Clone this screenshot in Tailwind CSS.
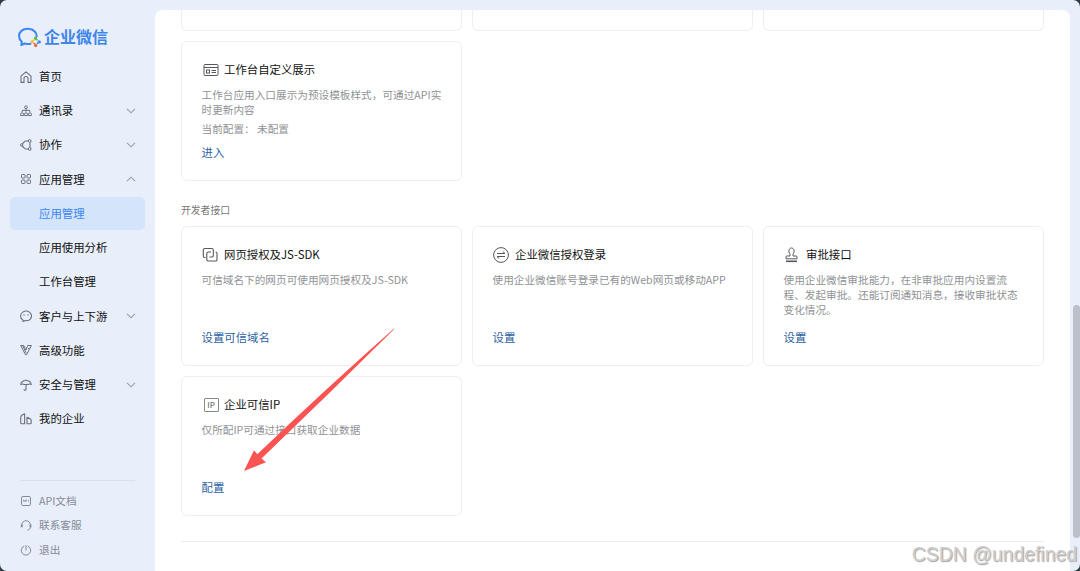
<!DOCTYPE html>
<html lang="zh-CN">
  <head>
    <meta charset="UTF-8" />
    <meta name="viewport" content="width=device-width, initial-scale=1.0" />
    <script src="https://cdn.jsdelivr.net/npm/@tailwindcss/browser@4"></script>
    <title>企业微信</title>
    <style>
      body {
        font-family: "Noto Sans CJK SC", sans-serif;
      }
    </style>
  </head>

  <body class="bg-[#2f3d40] overflow-hidden">
    <div
      class="relative flex h-[571px] w-[1080px] overflow-hidden rounded-[7px] bg-[#e8eefa]"
    >
      <!-- Sidebar -->
      <aside class="flex w-[155px] shrink-0 flex-col">
        <div class="flex h-[59.4px] items-end pb-[11px] pl-[17px]">
          <svg class="-mb-[1px] h-[22px] w-[25px]" viewBox="0 0 25 22" fill="none">
            <path
              d="M13.500 16.800c-1.800.4-3.800.3-5.600-.3l-3.600 1.500.5-3.200C1.200 11.600 1.200 6.500 4.400 3.900 8 .9 14.500 1.100 17.800 4.500c1.400 1.500 2 3 1.900 4.700"
              stroke="#3f88ee"
              stroke-width="2.1"
              stroke-linecap="round"
              stroke-linejoin="round"
            />
            <path d="M18.200 10l3 3-1.200.8-2.600-1.600z" fill="#58bd4a" />
            <circle cx="18.500" cy="11" r="1.600" fill="#58bd4a" />
            <circle cx="15" cy="14.800" r="1.600" fill="#f6c644" />
            <path d="M14.500 13.800l2.600-2 .8 1.100-2 2.500z" fill="#f6c644" />
            <circle cx="18.700" cy="18.600" r="1.600" fill="#f0663a" />
            <path d="M16 16.300l1.200-.8 2.600 2.300-1 1.200z" fill="#f0663a" />
            <circle cx="22.300" cy="14.900" r="1.600" fill="#3f88ee" />
            <path d="M20.300 17.500l-.8-1.200 2-2.400 1.400 1.200z" fill="#3f88ee" />
          </svg>
          <span class="ml-[2px] text-[16px] leading-[24px] font-bold text-[#3f86ea]"
            >企业微信</span
          >
        </div>

        <nav class="text-[11.4px] text-[#111]">
          <a class="flex h-[34.25px] items-center pr-[19px] pl-5">
            <svg class="mr-[7px] size-3 text-[#6b717b]" viewBox="0 0 12 12" fill="none" stroke="currentColor" stroke-width="1.1">
              <path d="M1 5.200L6 .8l5 4.400v6.200H8V7.500a2 2 0 0 0-4 0v3.900H1z" stroke-linejoin="round" />
            </svg>
            首页
          </a>
          <a class="flex h-[34.25px] items-center pr-[19px] pl-5">
            <svg class="mr-[7px] size-3 text-[#6b717b]" viewBox="0 0 12 12" fill="none" stroke="currentColor">
              <circle cx="6" cy="2.300" r="1.400" />
              <path d="M6 3.700v3M2.200 7V5.400h7.600V7" />
              <path d="M.6 10.500V9.300a1.500 1.500 0 0 1 3 0v1.200zM4.500 10.500V9.300a1.500 1.500 0 0 1 3 0v1.200zM8.400 10.500V9.300a1.500 1.500 0 0 1 3 0v1.200z" />
            </svg>
            通讯录
            <svg class="ml-auto h-[6px] w-[10px]" viewBox="0 0 10 6" fill="none" stroke="#989ea8" stroke-width="1.100"><path d="M1 .8l4 4 4-4" /></svg>
          </a>
          <a class="flex h-[34.25px] items-center pr-[19px] pl-5">
            <svg class="mr-[7px] size-3 text-[#6b717b]" viewBox="0 0 12 12" fill="none" stroke="currentColor">
              <path d="M8.300 1.700L5 2.200 2.200 5M2.200 7L5 9.800l3.300.5M10 3.500v5" stroke-width="1.100" />
              <circle cx="1.700" cy="6" r="1.200" />
              <circle cx="9.700" cy="2" r="1.400" />
              <circle cx="9.700" cy="10" r="1.400" />
            </svg>
            协作
            <svg class="ml-auto h-[6px] w-[10px]" viewBox="0 0 10 6" fill="none" stroke="#989ea8" stroke-width="1.100"><path d="M1 .8l4 4 4-4" /></svg>
          </a>
          <a class="flex h-[34.25px] items-center pr-[19px] pl-5">
            <svg class="mr-[7px] size-3 text-[#6b717b]" viewBox="0 0 12 12" fill="none" stroke="currentColor">
              <rect x="1.500" y="1.500" width="3.500" height="3.500" rx=".7" />
              <rect x="7" y="1.500" width="3.500" height="3.500" rx=".7" />
              <rect x="1.500" y="7" width="3.500" height="3.500" rx=".7" />
              <rect x="7" y="7" width="3.500" height="3.500" rx=".7" />
            </svg>
            应用管理
            <svg class="ml-auto h-[6px] w-[10px]" viewBox="0 0 10 6" fill="none" stroke="#989ea8" stroke-width="1.100"><path d="M1 5.200l4-4 4 4" /></svg>
          </a>
          <a class="mx-[10px] my-[0.6px] flex h-[33px] items-center rounded-[5px] bg-[#d4e4fa] pl-[29px] text-[#3a87f3]">应用管理</a>
          <a class="flex h-[34.25px] items-center pl-[39px]">应用使用分析</a>
          <a class="flex h-[34.25px] items-center pl-[39px]">工作台管理</a>
          <a class="flex h-[34.25px] items-center pr-[19px] pl-5">
            <svg class="mr-[7px] size-3 text-[#6b717b]" viewBox="0 0 12 12" fill="none" stroke="currentColor">
              <path d="M3 10.200C-.2 8.300-.1 4 2.700 2.100c2-1.300 4.800-1.300 6.700 0 2.900 2 2.800 6.100-.1 7.900-1.400.8-2.800.9-4.300.6L3 11.500z" stroke-linejoin="round" stroke-width="1.100" />
              <path d="M4 4.300v1.400M8 4.300v1.400" />
            </svg>
            客户与上下游
            <svg class="ml-auto h-[6px] w-[10px]" viewBox="0 0 10 6" fill="none" stroke="#989ea8" stroke-width="1.100"><path d="M1 .8l4 4 4-4" /></svg>
          </a>
          <a class="flex h-[34.25px] items-center pr-[19px] pl-5">
            <svg class="mr-[7px] size-3 text-[#6b717b]" viewBox="0 0 12 12" fill="none" stroke="currentColor" stroke-linejoin="round">
              <path d="M.7 1.500h3L6 6l1.700-4.500h3.700L6.500 10.800h-1zM2.800 2l3.400 7M8 4.500h1.600" />
            </svg>
            高级功能
          </a>
          <a class="flex h-[34.25px] items-center pr-[19px] pl-5">
            <svg class="mr-[7px] size-3 text-[#6b717b]" viewBox="0 0 12 12" fill="none" stroke="currentColor" stroke-width="1.100">
              <path d="M.7 5.500C1.200 2.800 3.500 1.500 6 1.500s4.800 1.300 5.300 4c-1.400-.7-2.300-.7-3.300 0H4C3 4.800 2.100 4.800.7 5.500zM6 .5v1M6 5.500v4.700c0 1.300-2 1.300-2 0" stroke-linejoin="round" />
            </svg>
            安全与管理
            <svg class="ml-auto h-[6px] w-[10px]" viewBox="0 0 10 6" fill="none" stroke="#989ea8" stroke-width="1.100"><path d="M1 .8l4 4 4-4" /></svg>
          </a>
          <a class="flex h-[34.25px] items-center pr-[19px] pl-5">
            <svg class="mr-[7px] size-3 text-[#6b717b]" viewBox="0 0 12 12" fill="none" stroke="currentColor" stroke-linejoin="round">
              <path d="M2.300 10.800H1.500a.8.800 0 0 1-.8-.8V4.500c0-1.200.5-1.800 1.400-2.500L4.600.7v10.100zM7 10.800V4.200l2.700 1.300c1 .5 1.500 1 1.500 2v2.500c0 .5-.3.800-.8.800z" stroke-width="1.100" />
            </svg>
            我的企业
          </a>
        </nav>

        <div class="mt-auto mr-5 ml-5 border-t border-[#d9e0ec] pt-[7.500px] pb-[9px] text-[10.65px] text-[#868c97]">
          <a class="flex h-[24.400px] items-center">
            <svg class="mr-[7px] size-3" viewBox="0 0 12 12" fill="none" stroke="currentColor">
              <rect x="1.500" y="1.500" width="9" height="9" rx="1.300" />
              <path d="M3 6.800l.8-2 .8 2M5.500 7V5h1v1h-1M8.500 4.800v2" stroke-width=".7" />
            </svg>
            API文档
          </a>
          <a class="flex h-[24.400px] items-center">
            <svg class="mr-[7px] size-3" viewBox="0 0 12 12" fill="none" stroke="currentColor">
              <path d="M1.800 8V6a4.300 4.300 0 0 1 8.600 0v2.300c0 1.500-1 2.600-3 2.700" />
              <path d="M1.700 5.500v2.700M10.500 5.500v2.700" stroke-width="1.800" />
            </svg>
            联系客服
          </a>
          <a class="flex h-[24.400px] items-center">
            <svg class="mr-[7px] size-3" viewBox="0 0 12 12" fill="none" stroke="currentColor">
              <path d="M4.300 2A4.700 4.700 0 1 0 7.700 2M6 1.200v5.300" />
            </svg>
            退出
          </a>
        </div>
      </aside>

      <!-- Content -->
      <main class="mt-[10px] w-[915px] overflow-hidden rounded-t-[8px] bg-white px-[26px]">
        <div class="grid h-[21px] grid-cols-3 gap-[10px]">
          <div class="rounded-b-[6px] border border-t-0 border-[#efeff0]"></div>
          <div class="rounded-b-[6px] border border-t-0 border-[#efeff0]"></div>
          <div class="rounded-b-[6px] border border-t-0 border-[#efeff0]"></div>
        </div>

        <div class="mt-[10px] grid grid-cols-3 gap-[10px]">
          <div class="flex h-[140px] flex-col rounded-[6px] border border-[#efeff0] pt-[18.500px] pr-[18px] pb-[19px] pl-[19.500px]">
            <h3 class="flex h-[18px] items-center text-[11.4px] text-[#111]">
              <svg class="mr-[5px] ml-[1.500px] h-4 w-4" viewBox="0 0 16 16" fill="none" stroke="#55585c">
                <rect x="1" y="2.500" width="14" height="11" rx="1" />
                <path d="M1 5.500h14M8.500 8.500H13M8.500 10.500H13" />
                <rect x="3.500" y="8" width="3" height="3" />
              </svg>
              工作台自定义展示
            </h3>
            <p class="mt-[8px] text-[10.65px] leading-[15px] text-[#8f9295]">
              工作台应用入口展示为预设模板样式，可通过API实时更新内容
            </p>
            <p class="mt-[4px] text-[10.65px] leading-[15px] text-[#8f9295]">
              当前配置：&nbsp;未配置
            </p>
            <a class="mt-auto text-[11.4px] leading-[18px] text-[#2d5fa3]">进入</a>
          </div>
        </div>

        <h2 class="mt-[21px] text-[9.800px] leading-[16px] text-[#777]">开发者接口</h2>

        <div class="mt-[8px] grid grid-cols-3 gap-x-[10px] gap-y-[10px]">
          <div class="flex h-[140px] flex-col rounded-[6px] border border-[#efeff0] pt-[19px] pr-[18px] pb-[19px] pl-[19.500px]">
            <h3 class="flex h-[18px] items-center text-[11.4px] text-[#111]">
              <svg class="mr-[6.500px] h-4 w-4" viewBox="0 0 16 16" fill="none" stroke="#55585c" stroke-width="1.100">
                <path d="M3.500 10.500H2.800a1.500 1.500 0 0 1-1.500-1.500V3a1.500 1.500 0 0 1 1.500-1.500h7A1.500 1.500 0 0 1 11.300 3v5.500A1.500 1.500 0 0 1 9.800 10H7.500" />
                <path d="M9 5H6.300A1.500 1.500 0 0 0 4.800 6.500v6A1.500 1.500 0 0 0 6.300 14h7.200a1.500 1.500 0 0 0 1.500-1.500v-6A1.500 1.500 0 0 0 13.500 5" />
              </svg>
              网页授权及JS-SDK
            </h3>
            <p class="mt-[8px] text-[10.65px] leading-[15px] text-[#8f9295]">
              可信域名下的网页可使用网页授权及JS-SDK
            </p>
            <a class="mt-auto text-[11.4px] leading-[18px] text-[#2d5fa3]">设置可信域名</a>
          </div>

          <div class="flex h-[140px] flex-col rounded-[6px] border border-[#efeff0] pt-[19px] pr-[18px] pb-[19px] pl-[19.500px]">
            <h3 class="flex h-[18px] items-center text-[11.4px] text-[#111]">
              <svg class="mr-[6.500px] h-4 w-4" viewBox="0 0 16 16" fill="none" stroke="#55585c">
                <circle cx="8" cy="8" r="7.400" />
                <path d="M4 6.500h8L9.800 4.500M12 9.500H4l2.200 2" />
              </svg>
              企业微信授权登录
            </h3>
            <p class="mt-[8px] text-[10.65px] leading-[15px] whitespace-nowrap text-[#8f9295]">
              使用企业微信账号登录已有的Web网页或移动APP
            </p>
            <a class="mt-auto text-[11.4px] leading-[18px] text-[#2d5fa3]">设置</a>
          </div>

          <div class="flex h-[140px] flex-col rounded-[6px] border border-[#efeff0] pt-[19px] pr-[18px] pb-[19px] pl-[19.500px]">
            <h3 class="flex h-[18px] items-center text-[11.4px] text-[#111]">
              <svg class="mr-[6.500px] h-4 w-4" viewBox="0 0 16 16" fill="none" stroke="#55585c">
                <path d="M6 9V7.200C3.800 4.500 5 1 7.500 1s3.700 3.500 1.500 6.200V9h3.200c.6 0 .8.300.8.800v2H2v-2c0-.5.200-.8.800-.8z" />
                <path d="M2 14.300h11" stroke-width="1.600" />
              </svg>
              审批接口
            </h3>
            <p class="mt-[8px] text-[10.65px] leading-[15px] text-[#8f9295]">
              使用企业微信审批能力，在非审批应用内设置流程、发起审批。还能订阅通知消息，接收审批状态变化情况。
            </p>
            <a class="mt-auto text-[11.4px] leading-[18px] text-[#2d5fa3]">设置</a>
          </div>

          <div class="flex h-[140px] flex-col rounded-[6px] border border-[#efeff0] pt-[19px] pr-[18px] pb-[19px] pl-[19.500px]">
            <h3 class="flex h-[18px] items-center text-[11.4px] text-[#111]">
              <span class="mr-[5.500px] ml-[2px] flex h-[14px] w-[15px] items-center justify-center rounded-[1px] border border-[#85888c] text-[8px] leading-none font-medium text-[#777a7e]">IP</span>
              企业可信IP
            </h3>
            <p class="mt-[8px] text-[10.65px] leading-[15px] text-[#8f9295]">
              仅所配IP可通过接口获取企业数据
            </p>
            <a class="mt-auto text-[11.4px] leading-[18px] text-[#2d5fa3]">配置</a>
          </div>
        </div>

        <hr class="mt-[25px] border-[#ececee]" />
      </main>

      <!-- Scrollbar thumb -->
      <div class="absolute top-[305px] right-0 h-[233px] w-[7px] rounded-full bg-[#bbc0ca]"></div>

      <!-- Arrow pointing at the config link -->
      <svg class="absolute top-[325px] left-[240px] h-[150px] w-[160px]" viewBox="240 325 160 150">
        <path d="M244 471L254 450.300 257.300 454.300Q325 389.500 394 328.500L394.300 329Q328 395 261.500 458.500L266 462.300z" fill="#fb5252" />
      </svg>

      <div
        class="absolute right-[3px] bottom-[4px] font-['Liberation_Sans'] text-[19.400px] leading-[26px] whitespace-nowrap text-[#cfcfcf] [text-shadow:1px_1px_1px_#a0a0a0]"
      >
        CSDN @undefined
      </div>
    </div>
  </body>
</html>
